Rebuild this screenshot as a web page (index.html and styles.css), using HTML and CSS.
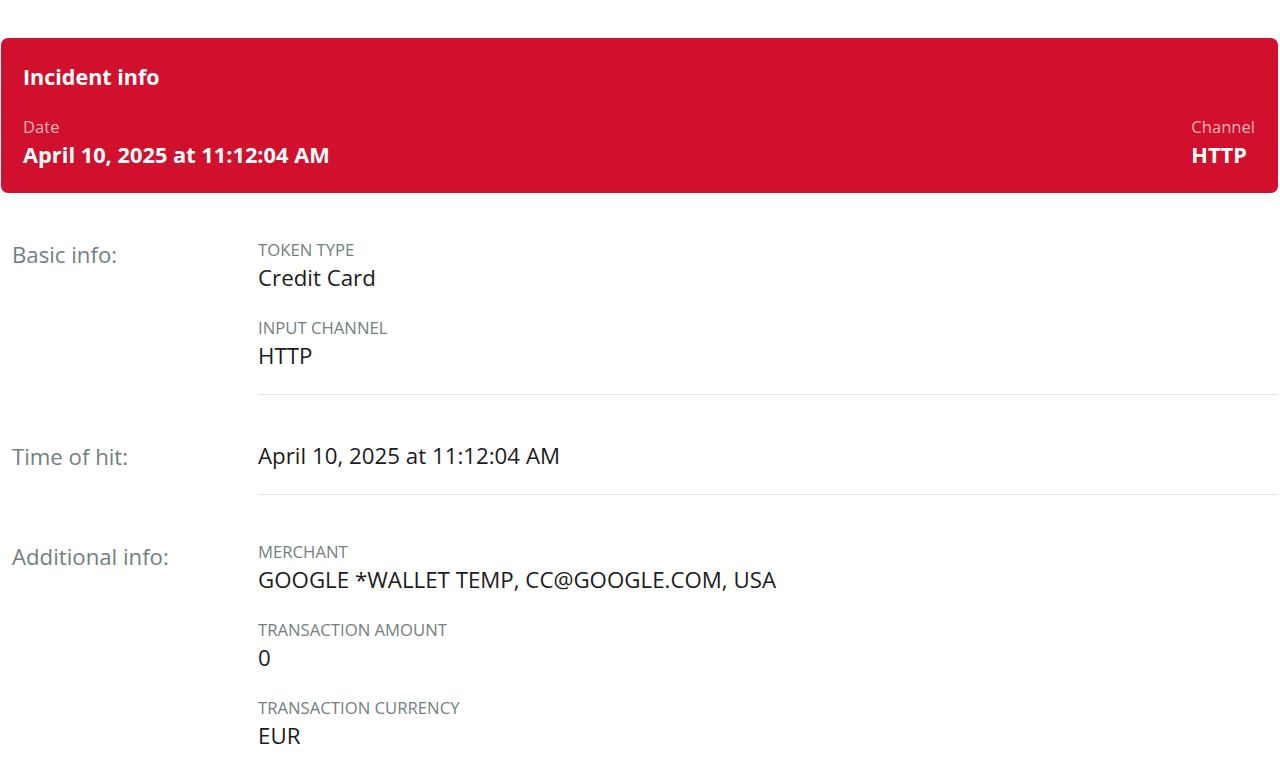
FILE: index.html
```html
<!DOCTYPE html>
<html lang="en">
<head>
    <meta charset="UTF-8">
    <meta name="viewport" content="width=device-width, initial-scale=1.0">
    <title>Incident info</title>
    <link rel="stylesheet" href="styles.css">
</head>
<body>
    <div class="page">
        <div class="incident-card">
            <h1>Incident info</h1>
            <div class="incident-meta">
                <div class="meta-item">
                    <div class="meta-label">Date</div>
                    <div class="meta-value">April 10, 2025 at 11:12:04 AM</div>
                </div>
                <div class="meta-item">
                    <div class="meta-label">Channel</div>
                    <div class="meta-value">HTTP</div>
                </div>
            </div>
        </div>

        <div class="section">
            <div class="section-title">Basic info:</div>
            <div class="section-body">
                <div class="field">
                    <div class="field-label">Token type</div>
                    <div class="field-value">Credit Card</div>
                </div>
                <div class="field">
                    <div class="field-label">Input channel</div>
                    <div class="field-value">HTTP</div>
                </div>
            </div>
        </div>

        <div class="section">
            <div class="section-title">Time of hit:</div>
            <div class="section-body">
                <div class="field">
                    <div class="field-value">April 10, 2025 at 11:12:04 AM</div>
                </div>
            </div>
        </div>

        <div class="section">
            <div class="section-title">Additional info:</div>
            <div class="section-body last">
                <div class="field">
                    <div class="field-label">Merchant</div>
                    <div class="field-value">GOOGLE *WALLET TEMP, CC@GOOGLE.COM, USA</div>
                </div>
                <div class="field">
                    <div class="field-label">Transaction amount</div>
                    <div class="field-value">0</div>
                </div>
                <div class="field">
                    <div class="field-label">Transaction currency</div>
                    <div class="field-value">EUR</div>
                </div>
            </div>
        </div>
    </div>
</body>
</html>
```

FILE: styles.css
```css
body {
    margin: 0;
    background-color: #ffffff;
    color: #1c1c1c;
    font-family: "Open Sans", "Noto Sans", Arial, sans-serif;
}
.page {
    padding: 38px 2px 0 1px;
}
.incident-card {
    background-color: #d0102c;
    color: #ffffff;
    border-radius: 7px;
    padding: 24px 23px 23px 22px;
}
.incident-card h1 {
    margin: 0;
    font-size: 21.5px;
    line-height: 30px;
    font-weight: 700;
}
.incident-meta {
    display: flex;
    justify-content: space-between;
    margin-top: 24px;
}
.meta-label {
    font-size: 16.6px;
    line-height: 22px;
    color: #f2b3bd;
}
.meta-value {
    margin-top: 2px;
    font-size: 21.8px;
    line-height: 30px;
    font-weight: 700;
}
.section {
    display: flex;
}
.section-title {
    width: 246px;
    padding-left: 11px;
    flex-shrink: 0;
    padding-top: 47px;
    font-size: 22.2px;
    line-height: 30px;
    color: #72807f;
}
.section-body {
    flex: 1;
    padding: 46px 0 23px;
    border-bottom: 1px solid #e3e7e7;
}
.section-body.last {
    border-bottom: none;
}
.field + .field {
    margin-top: 24px;
}
.field-label {
    font-size: 16.7px;
    line-height: 22px;
    text-transform: uppercase;
    color: #72807f;
}
.field-label + .field-value {
    margin-top: 2px;
}
.field-value {
    font-size: 22.3px;
    line-height: 30px;
}
```
